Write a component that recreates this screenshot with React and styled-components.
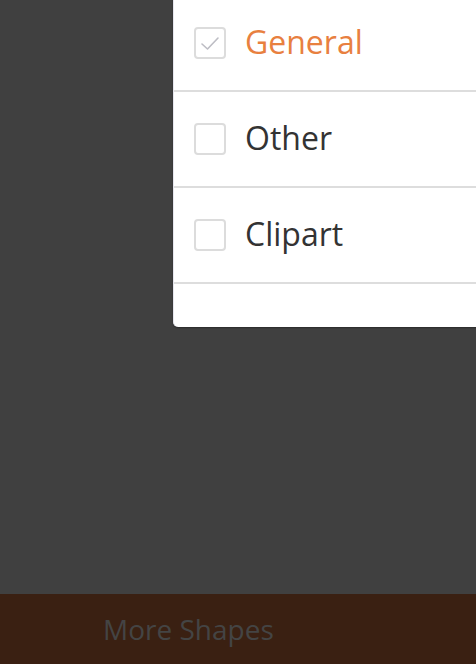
import React from "react";
import styled, { createGlobalStyle } from "styled-components";

const Global = createGlobalStyle`
  html, body { margin: 0; padding: 0; }
  body { background: #404040; font-family: "Open Sans", "Noto Sans", sans-serif; }
  #root { height: 664px; }
`;

const Screen = styled.div`
  position: relative;
  width: 476px;
  height: 664px;
  overflow: hidden;
  background: #404040;
  display: flex;
  flex-direction: column;
`;

const Canvas = styled.div`
  flex: 1;
`;

const BottomBar = styled.div`
  height: 70px;
  background: #3a2012;
  display: flex;
  align-items: center;
  padding-left: 103px;
`;

const BarLabel = styled.span`
  font-family: "Open Sans", sans-serif;
  font-size: 28px;
  color: #444444;
  line-height: 1;
`;

const Menu = styled.div`
  position: absolute;
  top: -4px;
  left: 173px;
  width: 320px;
  background: #ffffff;
  border-left: 1px solid #e6e6ee;
  border-radius: 0 0 0 5px;
  box-shadow: 0 1px 2px rgba(0, 0, 0, 0.35);
  padding-bottom: 43px;
`;

const Row = styled.div`
  height: 94px;
  border-bottom: 2px solid #dddddd;
  display: flex;
  align-items: center;
  padding-left: 20px;
  gap: 19px;
`;

const Box = styled.div`
  width: 28px;
  height: 28px;
  border: 2px solid #dcdcdc;
  border-radius: 4px;
  display: flex;
  align-items: center;
  justify-content: center;
  flex-shrink: 0;
`;

const Label = styled.span`
  font-family: "Open Sans", sans-serif;
  font-size: 32px;
  line-height: 1;
  color: ${(p) => (p.$active ? "#e8803f" : "#333333")};
  margin-top: -2px;
`;

const items = [
  { label: "General", checked: true },
  { label: "Other", checked: false },
  { label: "Clipart", checked: false },
];

export default function App() {
  return (
    <>
      <Global />
      <Screen>
        <Canvas />
        <BottomBar>
          <BarLabel>More Shapes</BarLabel>
        </BottomBar>
        <Menu>
          {items.map((it) => (
            <Row key={it.label}>
              <Box>
                {it.checked && (
                  <svg width="22" height="22" viewBox="0 0 22 22">
                    <path d="M3 12 L8.5 17 L19 6" fill="none" stroke="#bdbdc4" strokeWidth="1.6" strokeLinecap="round" strokeLinejoin="round" />
                  </svg>
                )}
              </Box>
              <Label $active={it.checked}>{it.label}</Label>
            </Row>
          ))}
        </Menu>
      </Screen>
    </>
  );
}
